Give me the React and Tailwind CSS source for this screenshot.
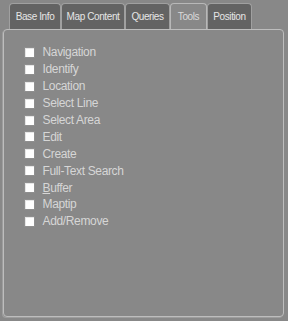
const tabs = [
  { label: "Base Info", w: "w-[52px]" },
  { label: "Map Content", w: "w-[64px]" },
  { label: "Queries", w: "w-[45px]" },
  { label: "Tools", w: "w-[37px]", active: true },
  { label: "Position", w: "w-[45px]" },
];

const tools = [
  "Navigation",
  "Identify",
  "Location",
  "Select Line",
  "Select Area",
  "Edit",
  "Create",
  "Full-Text Search",
  "Buffer",
  "Maptip",
  "Add/Remove",
];

export default function App() {
  return (
    <div className="w-[288px] h-[321px] bg-[#888888] pt-[3px] pl-[3px] pr-[4px] font-['Liberation_Sans',Arial,sans-serif]">
      {/* Tab strip */}
      <div className="flex pl-[6px] h-[26px]">
        {tabs.map((t) => (
          <div
            key={t.label}
            className={`${t.w} h-[26px] flex items-center justify-center rounded-t-[4px] border border-b-0 text-[10px] tracking-[-0.4px] ${
              t.active
                ? "bg-[#888888] border-[#b8b8b8] text-[#dadada]"
                : "bg-[#636363] border-[#a0a0a0] text-[#e6e6e6]"
            }`}
          >
            {t.label}
          </div>
        ))}
      </div>

      {/* Panel */}
      <div className="h-[288px] rounded-[4px] border border-[#bdbdbd] shadow-[-1px_1px_0_#9d9d9d] pt-[14px] pl-[20px]">
        {tools.map((name) => (
          <label key={name} className="flex items-center h-[16.9px] text-[12px] tracking-[-0.35px] text-[#d6d6d6]">
            <span className="w-[11px] h-[11px] bg-white border border-[#8f8f8f] shadow-[inset_1px_1px_0_#e6e6e6] shrink-0" />
            <span className="ml-[7.5px]">
              {name === "Buffer" ? (
                <>
                  <span className="underline">B</span>uffer
                </>
              ) : (
                name
              )}
            </span>
          </label>
        ))}
      </div>
    </div>
  );
}
